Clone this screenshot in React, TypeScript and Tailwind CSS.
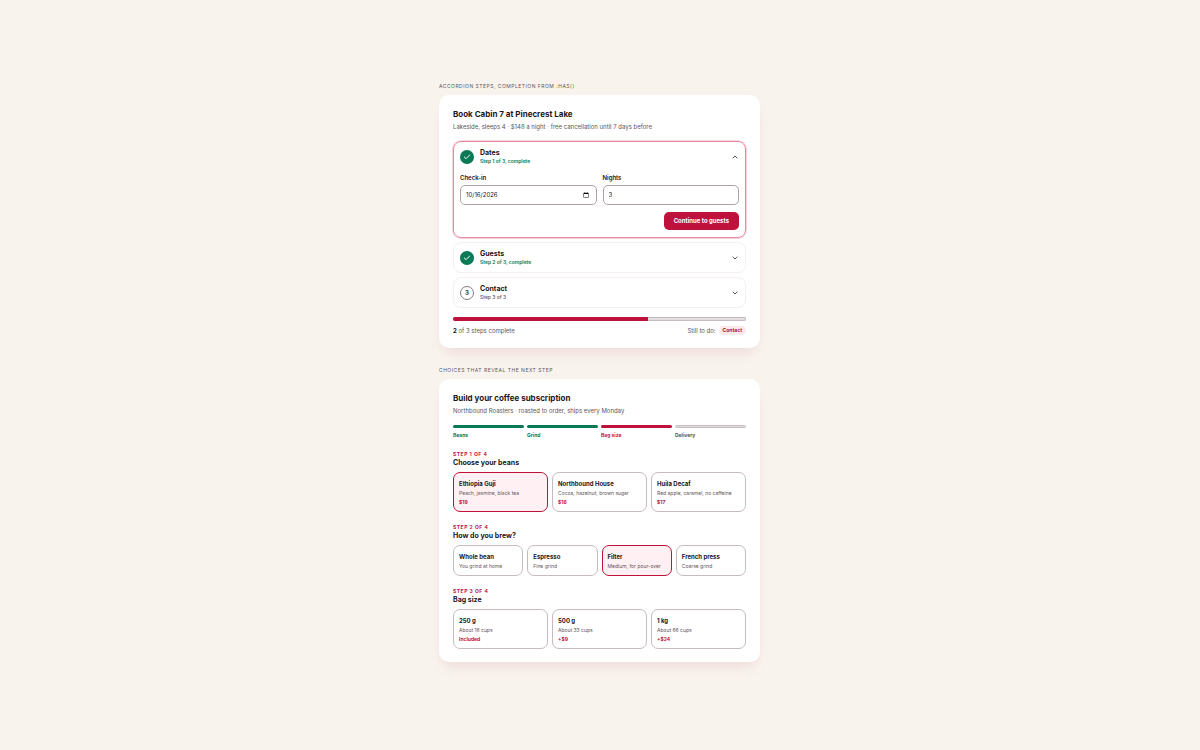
import { useState, type ReactNode } from 'react';
import { Check, ChevronDown, ChevronUp } from 'lucide-react';

type StepItemProps = {
  index: number;
  title: string;
  note: string;
  done: boolean;
  open: boolean;
  onToggle: () => void;
  children?: ReactNode;
};

function StepItem({ index, title, note, done, open, onToggle, children }: StepItemProps) {
  const Chevron = open ? ChevronUp : ChevronDown;
  return (
    <section
      className={
        open
          ? 'rounded-lg border border-[#e58aa0] shadow-[0_0_0_1px_#f7d3dc]'
          : 'rounded-lg border border-[#f5eff0]'
      }
    >
      <h3>
        <button
          type="button"
          aria-expanded={open}
          onClick={onToggle}
          className="flex w-full items-center gap-1.5 px-1.5 pt-[6px] pb-[5px] text-left"
        >
          {done ? (
            <span className="grid size-[14px] shrink-0 place-items-center rounded-full bg-[#087a55] text-white">
              <Check className="size-2" strokeWidth={3} />
            </span>
          ) : (
            <span className="grid size-[14px] shrink-0 place-items-center rounded-full border border-[#85797e] text-[6px] font-bold text-[#463b40]">
              {index}
            </span>
          )}
          <span className="flex-1">
            <span className="block text-[7px] leading-[9px] font-bold">{title}</span>
            <span
              className={
                done
                  ? 'block text-[5px] leading-[9px] font-semibold text-[#087a55]'
                  : 'block text-[5px] leading-[9px] font-medium text-[#625459]'
              }
            >
              {note}
            </span>
          </span>
          <Chevron className="size-2 text-[#5c4f54]" strokeWidth={3} />
        </button>
      </h3>
      {open && children}
    </section>
  );
}

type Choice = { name: string; detail: string; price?: string };

type ChoiceGroupProps = {
  step: number;
  title: string;
  name: string;
  wide?: boolean;
  choices: Choice[];
  initial?: string;
};

function ChoiceGroup({ step, title, name, wide, choices, initial = '' }: ChoiceGroupProps) {
  const [picked, setPicked] = useState(initial);
  return (
    <fieldset className="mt-[11px]">
      <legend className="mb-[5px]">
        <span className="block text-[5px] leading-[8px] font-bold tracking-widest text-[#be123c] uppercase">
          Step {step} of 4
        </span>
        <span className="block text-[7px] leading-[9px] font-bold">{title}</span>
      </legend>
      <div className={wide ? 'grid grid-cols-4 gap-1' : 'grid grid-cols-3 gap-1'}>
        {choices.map((c) => (
          <label
            key={c.name}
            className={
              picked === c.name
                ? 'cursor-pointer rounded-[7px] border border-[#be123c] bg-[#fff1f3] px-[5px] pt-[6px] pb-1'
                : 'cursor-pointer rounded-[7px] border border-[#c5bbc0] bg-white px-[5px] pt-[6px] pb-1'
            }
          >
            <input
              type="radio"
              name={name}
              value={c.name}
              checked={picked === c.name}
              onChange={() => setPicked(c.name)}
              className="sr-only"
            />
            <span className="block text-[6px] leading-[10px] font-bold">{c.name}</span>
            <span className="block text-[5px] leading-[9px] whitespace-nowrap text-[#625459]">{c.detail}</span>
            {c.price && (
              <span className="block text-[5px] leading-[9px] font-bold text-[#be123c]">{c.price}</span>
            )}
          </label>
        ))}
      </div>
    </fieldset>
  );
}

const stages = [
  { name: 'Beans', bar: 'bg-[#087a55]', text: 'text-[#087a55]' },
  { name: 'Grind', bar: 'bg-[#087a55]', text: 'text-[#087a55]' },
  { name: 'Bag size', bar: 'bg-[#be123c]', text: 'text-[#be123c]' },
  { name: 'Delivery', bar: 'border border-[#c5bbc0] bg-[#e5dee0]', text: 'text-[#625459]' },
];

const cardClass =
  'rounded-[10px] bg-white px-[14px] pb-[13px] shadow-[0_8px_16px_-6px_rgba(136,19,55,0.14)]';
const captionClass =
  'mb-[5px] text-[5px] leading-[8px] tracking-widest text-[#625459] uppercase';
const inputClass =
  'block h-5 w-full min-w-0 rounded-[5px] border border-[#aea2a7] bg-white px-[5px] text-[6px]';
const dateClass =
  '[&::-webkit-datetime-edit-month-field]:p-0 [&::-webkit-datetime-edit-day-field]:p-0 [&::-webkit-datetime-edit-year-field]:p-0';

export default function App() {
  const [open, setOpen] = useState(1);
  const toggle = (n: number) => setOpen(open === n ? 0 : n);

  return (
    <main className="flex min-h-screen flex-col items-center justify-center bg-[#f9f3ee] pr-px pb-[7px] font-[Inter,sans-serif] text-[#1f1518]">
      <div className="flex w-full max-w-[321px] flex-col gap-[18px]">
        <section>
          <p className={captionClass}>Accordion steps, completion from :has()</p>
          <div className={`${cardClass} pt-[13px]`}>
            <h2 className="text-[8px] leading-[12px] font-bold">Book Cabin 7 at Pinecrest Lake</h2>
            <p className="mt-[2px] text-[6px] leading-[9px] text-[#625459]">
              Lakeside, sleeps 4 · $148 a night · free cancellation until 7 days before
            </p>
            <div className="mt-[10px] flex flex-col gap-1">
              <StepItem index={1} title="Dates" note="Step 1 of 3, complete" done open={open === 1} onToggle={() => toggle(1)}>
                <form className="px-1.5 pt-[3px] pb-[7px]" onSubmit={(e) => e.preventDefault()}>
                  <div className="grid grid-cols-2 gap-1.5">
                    <div>
                      <label htmlFor="checkin" className="mb-[3px] block text-[6px] leading-[8px] font-semibold">
                        Check-in
                      </label>
                      <input
                        id="checkin"
                        type="date"
                        defaultValue="2026-10-16"
                        className={`${inputClass} ${dateClass}`}
                      />
                    </div>
                    <div>
                      <label htmlFor="nights" className="mb-[3px] block text-[6px] leading-[8px] font-semibold">
                        Nights
                      </label>
                      <input id="nights" type="number" min={1} defaultValue={3} className={inputClass} />
                    </div>
                  </div>
                  <div className="mt-[7px] flex justify-end">
                    <button
                      type="button"
                      onClick={() => setOpen(2)}
                      className="h-[18px] rounded-[5px] bg-[#be123c] px-[10px] text-[6px] font-bold text-white"
                    >
                      Continue to guests
                    </button>
                  </div>
                </form>
              </StepItem>
              <StepItem index={2} title="Guests" note="Step 2 of 3, complete" done open={open === 2} onToggle={() => toggle(2)} />
              <StepItem index={3} title="Contact" note="Step 3 of 3" done={false} open={open === 3} onToggle={() => toggle(3)} />
            </div>
            <div
              role="progressbar"
              aria-label="Booking progress"
              aria-valuemin={0}
              aria-valuemax={3}
              aria-valuenow={2}
              className="mt-[9px] h-1 overflow-hidden rounded-full bg-[#e5dee0] inset-ring inset-ring-[#c5bbc0]"
            >
              <div className="h-full w-2/3 bg-[#be123c]" />
            </div>
            <div className="mt-[5px] flex items-center justify-between text-[6px] leading-[9px] text-[#625459]">
              <p>
                <strong className="font-bold text-[#1f1518]">2</strong> of 3 steps complete
              </p>
              <p className="flex items-center gap-[3px]">
                Still to do:
                <span className="rounded-full bg-[#ffe8ec] px-1 text-[5px] leading-[9px] font-bold text-[#9f1239]">
                  Contact
                </span>
              </p>
            </div>
          </div>
        </section>

        <section>
          <p className={captionClass}>Choices that reveal the next step</p>
          <div className={`${cardClass} pt-[13px]`}>
            <h2 className="text-[8px] leading-[12px] font-bold">Build your coffee subscription</h2>
            <p className="mt-[2px] text-[6px] leading-[9px] text-[#625459]">
              Northbound Roasters · roasted to order, ships every Monday
            </p>
            <ol className="mt-[10px] grid grid-cols-4 gap-[3px]">
              {stages.map((s) => (
                <li key={s.name}>
                  <div className={`h-[3px] rounded-full ${s.bar}`} />
                  <span className={`mt-[3px] block text-[5px] leading-[8px] font-bold ${s.text}`}>{s.name}</span>
                </li>
              ))}
            </ol>
            <ChoiceGroup
              step={1}
              title="Choose your beans"
              name="beans"
              initial="Ethiopia Guji"
              choices={[
                { name: 'Ethiopia Guji', detail: 'Peach, jasmine, black tea', price: '$19' },
                { name: 'Northbound House', detail: 'Cocoa, hazelnut, brown sugar', price: '$16' },
                { name: 'Huila Decaf', detail: 'Red apple, caramel, no caffeine', price: '$17' },
              ]}
            />
            <ChoiceGroup
              step={2}
              title="How do you brew?"
              name="grind"
              wide
              initial="Filter"
              choices={[
                { name: 'Whole bean', detail: 'You grind at home' },
                { name: 'Espresso', detail: 'Fine grind' },
                { name: 'Filter', detail: 'Medium, for pour-over' },
                { name: 'French press', detail: 'Coarse grind' },
              ]}
            />
            <ChoiceGroup
              step={3}
              title="Bag size"
              name="size"
              choices={[
                { name: '250 g', detail: 'About 16 cups', price: 'Included' },
                { name: '500 g', detail: 'About 33 cups', price: '+$9' },
                { name: '1 kg', detail: 'About 66 cups', price: '+$24' },
              ]}
            />
          </div>
        </section>
      </div>
    </main>
  );
}
